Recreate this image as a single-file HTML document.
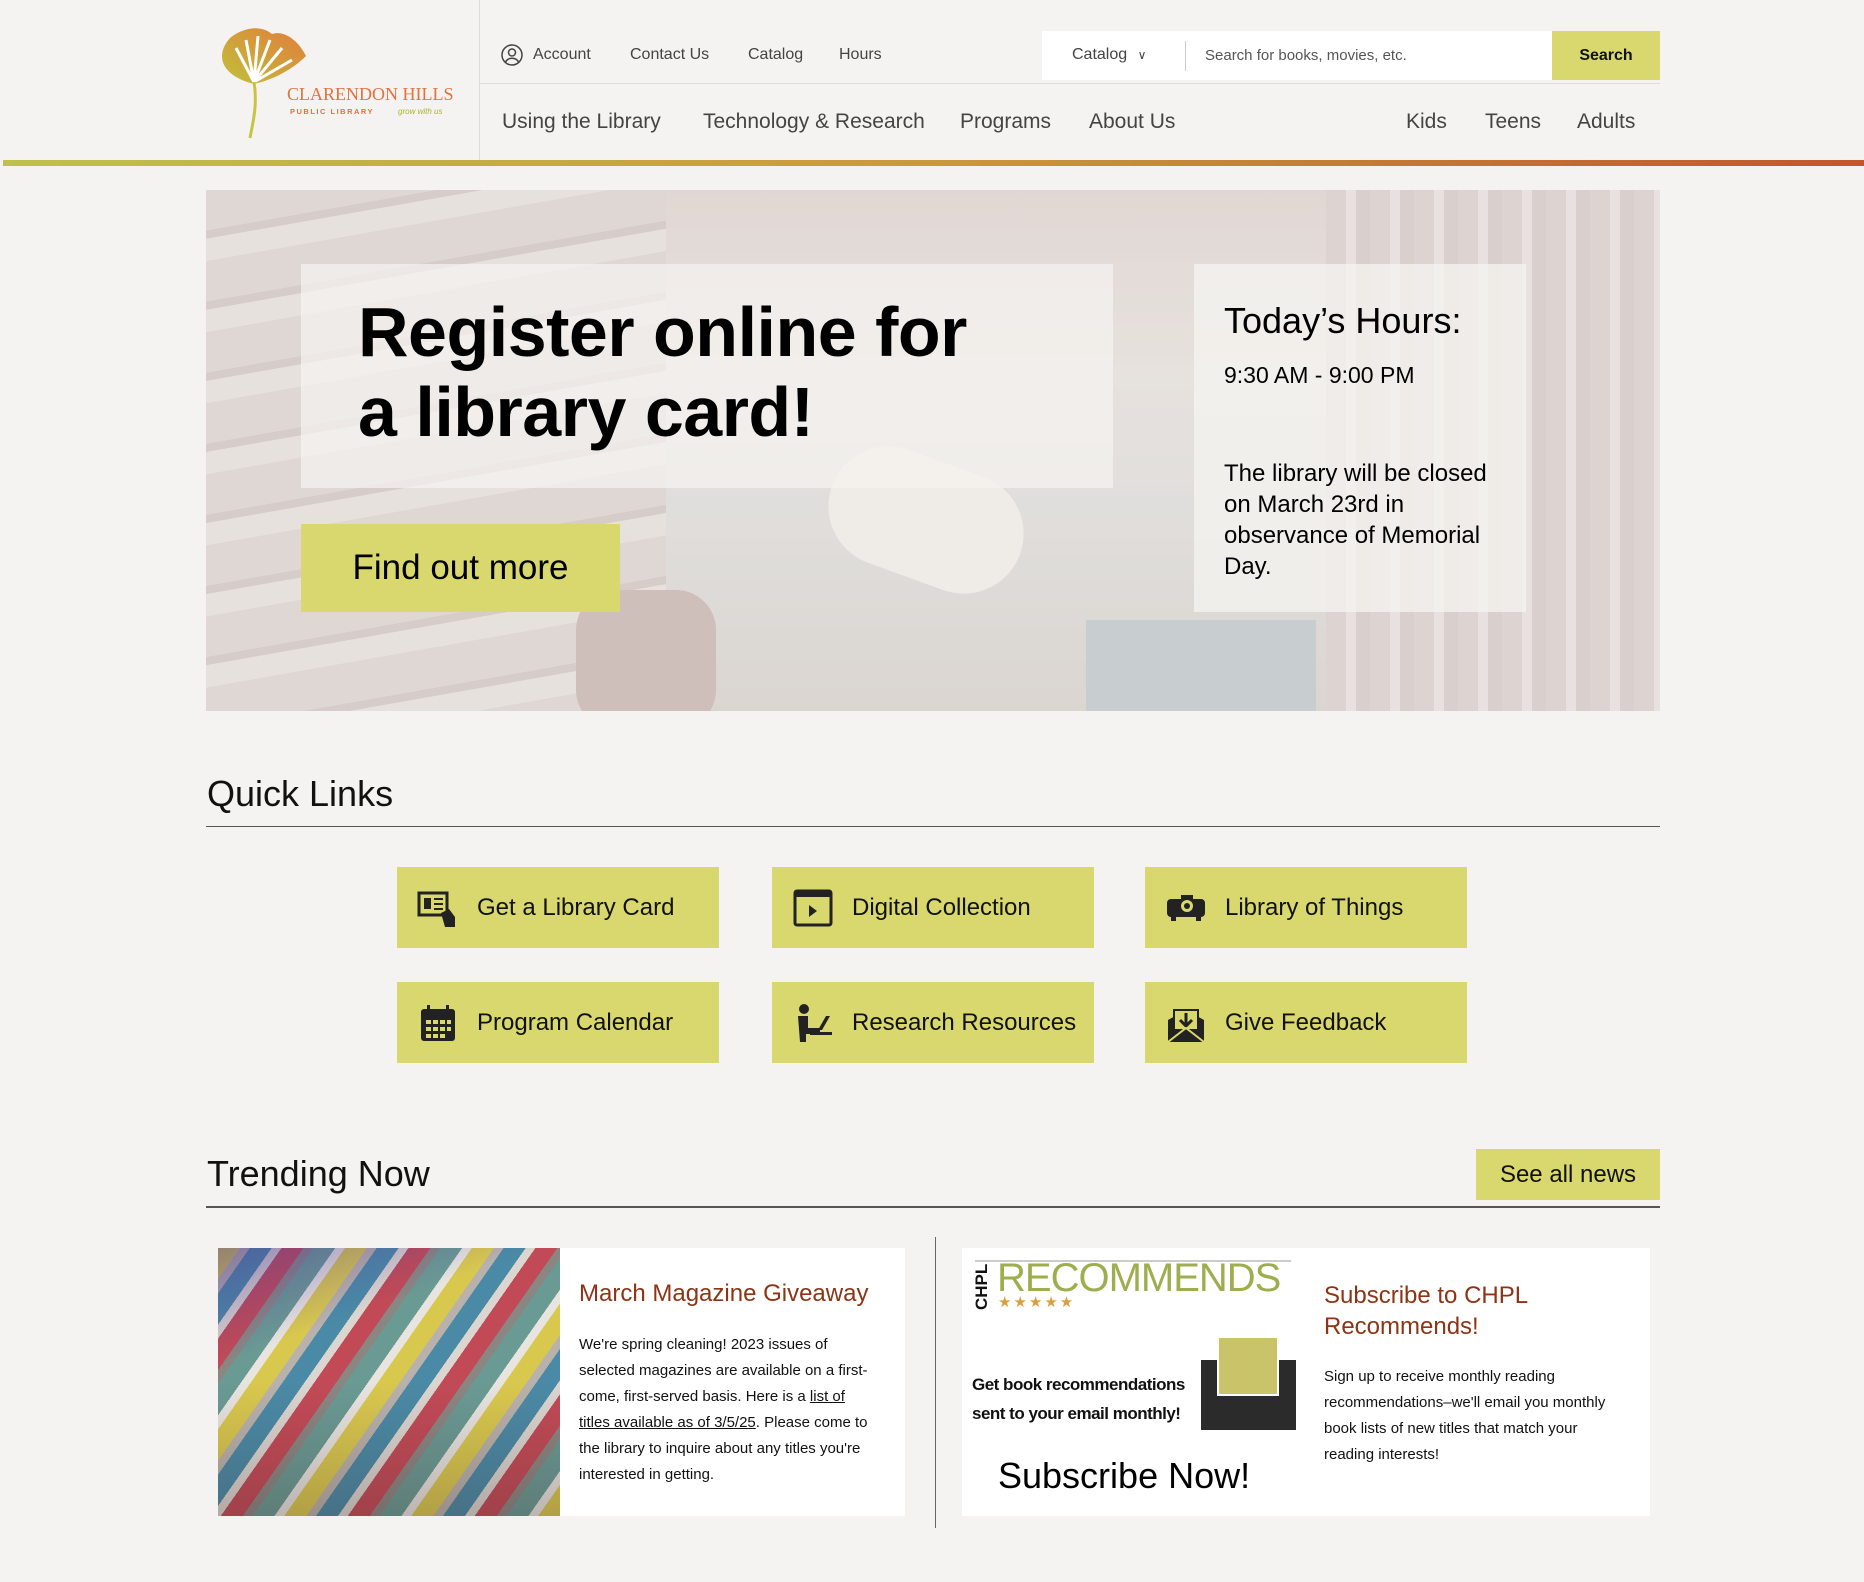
<!DOCTYPE html>
<html><head><meta charset="utf-8"><style>
*{margin:0;padding:0;box-sizing:border-box}
body{width:1864px;height:1582px;background:#f4f3f1;font-family:"Liberation Sans",sans-serif;color:#111;position:relative;overflow:hidden}
.a{position:absolute}
.top a{position:absolute;top:46px;font-size:16px;color:#444;text-decoration:none}
.nav{position:absolute;top:110px;font-size:21px;color:#444}
.ql{position:absolute;width:322px;height:81px;background:#d9d86e;display:flex;align-items:center;padding-left:20px;font-size:24px;color:#111}
.ql svg{width:42px;height:42px;margin-right:18px;flex:none}
</style></head><body>
<!-- logo -->
<svg class="a" style="left:212px;top:26px" width="250" height="115" viewBox="0 0 250 115">
<defs><linearGradient id="lg" x1="0" y1="1" x2="1" y2="0"><stop offset="0" stop-color="#bfc23a"/><stop offset="1" stop-color="#e47b3c"/></linearGradient></defs>
<path d="M42 58 C10 50 2 30 18 12 C30 2 48 -2 60 8 C72 4 86 14 94 30 C80 44 60 54 42 58Z" fill="url(#lg)"/>
<path d="M42 56 L24 22 M42 56 L34 14 M42 56 L46 10 M42 56 L58 14 M42 56 L70 22 M42 56 L80 34" stroke="#fff" stroke-width="3"/>
<path d="M42 56 C46 80 40 100 38 112" stroke="#c9c43f" stroke-width="3" fill="none"/>
<text x="75" y="74" font-family="Liberation Serif" font-size="18" fill="#e4703c">CLARENDON HILLS</text>
<text x="78" y="88" font-size="7.5" fill="#e4703c" letter-spacing="1.5" font-weight="bold">PUBLIC LIBRARY</text>
<text x="186" y="88" font-size="8" fill="#a8b52e" font-style="italic">grow with us</text>
</svg>
<div class="a" style="left:479px;top:0;width:1px;height:160px;background:#ddd"></div>
<div class="a" style="left:480px;top:83px;width:1180px;height:1px;background:#ddd"></div>
<div class="top">
<svg class="a" style="left:501px;top:44px" width="22" height="22" viewBox="0 0 22 22" fill="none" stroke="#444" stroke-width="1.5"><circle cx="11" cy="11" r="10"/><circle cx="11" cy="8.5" r="3.5"/><path d="M4.5 18 C7 13 15 13 17.5 18"/></svg>
<a style="left:533px">Account</a><a style="left:630px">Contact Us</a><a style="left:748px">Catalog</a><a style="left:839px">Hours</a>
</div>
<div class="a" style="left:1042px;top:31px;width:618px;height:49px;background:#fff"></div>
<div class="a" style="left:1072px;top:46px;font-size:16px;color:#444">Catalog <span style="font-size:12px;margin-left:6px">&#8744;</span></div>
<div class="a" style="left:1185px;top:41px;width:1px;height:30px;background:#ccc"></div>
<div class="a" style="left:1205px;top:47px;font-size:15px;color:#555">Search for books, movies, etc.</div>
<div class="a" style="left:1552px;top:31px;width:108px;height:49px;background:#d9d86e;font-size:16px;font-weight:bold;display:flex;align-items:center;justify-content:center">Search</div>
<div class="nav" style="left:502px">Using the Library</div>
<div class="nav" style="left:703px">Technology &amp; Research</div>
<div class="nav" style="left:960px">Programs</div>
<div class="nav" style="left:1089px">About Us</div>
<div class="nav" style="left:1406px">Kids</div>
<div class="nav" style="left:1485px">Teens</div>
<div class="nav" style="left:1577px">Adults</div>
<div class="a" style="left:3px;top:160px;width:1861px;height:6px;background:linear-gradient(90deg,#bfc14a,#c89a3a 50%,#c4552a)"></div>

<!-- hero -->
<div class="a" style="left:206px;top:190px;width:1454px;height:521px;overflow:hidden;background:#d9d2cc">
<div class="a" style="left:0;top:0;width:460px;height:521px;background:repeating-linear-gradient(170deg,#d6ccc8 0 40px,#c8bcb8 40px 48px,#e2dcd8 48px 70px)"></div>
<div class="a" style="left:460px;top:0;width:660px;height:521px;background:linear-gradient(180deg,#d8cdc9 0,#e2ddd8 35%,#d8d8d6 60%,#cfcac4)"></div>
<div class="a" style="left:1120px;top:0;width:334px;height:521px;background:repeating-linear-gradient(90deg,#d3c6c4 0 20px,#e3dcda 20px 30px,#cdc2c0 30px 44px)"></div>
<div class="a" style="left:620px;top:270px;width:200px;height:120px;border-radius:60px;background:#eeebe6;transform:rotate(20deg)"></div>
<div class="a" style="left:880px;top:430px;width:230px;height:91px;background:#b3bec4"></div>
<div class="a" style="left:370px;top:400px;width:140px;height:140px;background:#bda8a2;border-radius:40px"></div>
<div class="a" style="left:0;top:0;width:1454px;height:521px;background:rgba(240,236,232,.35)"></div>
</div>
<div class="a" style="left:301px;top:264px;width:812px;height:224px;background:rgba(245,243,240,.72)"></div>
<div class="a" style="left:358px;top:292px;font-size:70px;font-weight:bold;line-height:80px;letter-spacing:-.5px;color:#000">Register online for<br>a library card!</div>
<div class="a" style="left:301px;top:524px;width:319px;height:88px;background:#d9d86e;font-size:35px;display:flex;align-items:center;justify-content:center;color:#000">Find out more</div>
<div class="a" style="left:1194px;top:264px;width:332px;height:348px;background:rgba(245,243,240,.78)"></div>
<div class="a" style="left:1224px;top:300px;font-size:36px;color:#000">Today’s Hours:</div>
<div class="a" style="left:1224px;top:362px;font-size:23px;color:#000">9:30 AM - 9:00 PM</div>
<div class="a" style="left:1224px;top:458px;font-size:24px;line-height:31px;color:#000;width:285px">The library will be closed on March 23rd in observance of Memorial Day.</div>

<!-- quick links -->
<div class="a" style="left:207px;top:773px;font-size:36px;color:#111">Quick Links</div>
<div class="a" style="left:206px;top:826px;width:1454px;height:1px;background:#555"></div>
<div class="ql" style="left:397px;top:867px"><svg viewBox="0 0 42 42"><rect x="2" y="6" width="28" height="22" fill="none" stroke="#222" stroke-width="3"/><rect x="7" y="11" width="7" height="11" fill="#222"/><path d="M17 12h9M17 17h9M17 22h9" stroke="#222" stroke-width="2"/><path d="M24 26 l8 -4 l6 8 v10 h-10z" fill="#222"/></svg>Get a Library Card</div>
<div class="ql" style="left:772px;top:867px"><svg viewBox="0 0 42 42"><rect x="3" y="4" width="36" height="34" rx="2" fill="none" stroke="#222" stroke-width="3"/><rect x="3" y="4" width="36" height="6" fill="#222"/><path d="M17 18 l8 6 l-8 6z" fill="#222"/></svg>Digital Collection</div>
<div class="ql" style="left:1145px;top:867px"><svg viewBox="0 0 42 42"><rect x="2" y="12" width="38" height="18" rx="4" fill="#222"/><circle cx="22" cy="19" r="6" fill="#d9d86e"/><circle cx="22" cy="19" r="3" fill="#222"/><rect x="16" y="8" width="12" height="5" fill="#222"/><rect x="6" y="30" width="5" height="4" fill="#222"/><rect x="31" y="30" width="5" height="4" fill="#222"/></svg>Library of Things</div>
<div class="ql" style="left:397px;top:982px"><svg viewBox="0 0 42 42"><rect x="4" y="7" width="34" height="32" rx="3" fill="#222"/><rect x="10" y="3" width="3" height="8" fill="#222"/><rect x="29" y="3" width="3" height="8" fill="#222"/><g fill="#d9d86e"><rect x="9" y="18" width="5" height="4"/><rect x="16" y="18" width="5" height="4"/><rect x="23" y="18" width="5" height="4"/><rect x="30" y="18" width="4" height="4"/><rect x="9" y="25" width="5" height="4"/><rect x="16" y="25" width="5" height="4"/><rect x="23" y="25" width="5" height="4"/><rect x="30" y="25" width="4" height="4"/><rect x="9" y="32" width="5" height="4"/><rect x="16" y="32" width="5" height="4"/><rect x="23" y="32" width="5" height="4"/></g></svg>Program Calendar</div>
<div class="ql" style="left:772px;top:982px"><svg viewBox="0 0 42 42"><circle cx="12" cy="7" r="5" fill="#222"/><path d="M6 14h10v12h12v6h-14v8h-6z" fill="#222"/><path d="M26 28 l8 -14 h4 l-8 14z" fill="#222"/><rect x="18" y="30" width="22" height="3" fill="#222"/></svg>Research Resources</div>
<div class="ql" style="left:1145px;top:982px"><svg viewBox="0 0 42 42"><path d="M3 18 l18 -10 l18 10 v22 h-36z" fill="#222"/><rect x="9" y="8" width="24" height="20" fill="#d9d86e" stroke="#222" stroke-width="2"/><path d="M21 11v12M15 18l6 6l6-6" stroke="#222" stroke-width="3" fill="none"/><path d="M3 40 l18 -14 l18 14" stroke="#d9d86e" stroke-width="2" fill="none"/></svg>Give Feedback</div>

<!-- trending -->
<div class="a" style="left:207px;top:1153px;font-size:36px;color:#111">Trending Now</div>
<div class="a" style="left:1476px;top:1149px;width:184px;height:51px;background:#d9d86e;font-size:24px;display:flex;align-items:center;justify-content:center">See all news</div>
<div class="a" style="left:206px;top:1206px;width:1454px;height:2px;background:#555"></div>
<div class="a" style="left:935px;top:1237px;width:1px;height:291px;background:#666"></div>

<div class="a" style="left:218px;top:1248px;width:687px;height:268px;background:#fff"></div>
<div class="a" style="left:218px;top:1248px;width:342px;height:268px;background:
linear-gradient(160deg,rgba(80,60,150,.5),transparent 30%),
linear-gradient(0deg,rgba(60,40,40,.25),transparent 50%),
repeating-linear-gradient(125deg,#d9c84e 0 18px,#b9b2ac 18px 26px,#4a8aa6 26px 44px,#dcd6d0 44px 52px,#c24a56 52px 70px,#8a8682 70px 78px,#6a9a94 78px 96px,#e8e4e0 96px 104px)"></div>
<div class="a" style="left:579px;top:1280px;font-size:24px;color:#8c3413">March Magazine Giveaway</div>
<div class="a" style="left:579px;top:1332px;width:300px;font-size:15px;line-height:26px;color:#111">We're spring cleaning! 2023 issues of selected magazines are available on a first-come, first-served basis. Here is a <u>list of titles available as of 3/5/25</u>. Please come to the library to inquire about any titles you're interested in getting.</div>

<div class="a" style="left:962px;top:1248px;width:688px;height:268px;background:#fff"></div>
<div class="a" style="left:975px;top:1260px;width:316px;height:2px;background:#ccc"></div>
<div class="a" style="left:972px;font-size:17px;font-weight:bold;transform:rotate(-90deg);transform-origin:left top;top:1310px">CHPL</div>
<div class="a" style="left:997px;top:1256px;font-size:40px;color:#9eae4e;letter-spacing:-1px">RECOMMENDS</div>
<div class="a" style="left:998px;top:1293px;font-size:15px;color:#d9a040;letter-spacing:2px">★★★★★</div>
<div class="a" style="left:972px;top:1370px;font-size:17px;font-weight:bold;line-height:29px;letter-spacing:-.5px">Get book recommendations<br>sent to your email monthly!</div>
<div class="a" style="left:1201px;top:1360px;width:95px;height:70px;background:#2b2b2b"></div>
<div class="a" style="left:1217px;top:1336px;width:62px;height:60px;background:#c9c36a;border:2px solid #fff"></div>
<div class="a" style="left:998px;top:1455px;font-size:36px;color:#000">Subscribe Now!</div>
<div class="a" style="left:1324px;top:1280px;font-size:24px;line-height:31px;color:#8c3413">Subscribe to CHPL<br>Recommends!</div>
<div class="a" style="left:1324px;top:1364px;width:300px;font-size:15px;line-height:26px;color:#111">Sign up to receive monthly reading recommendations–we'll email you monthly book lists of new titles that match your reading interests!</div>
</body></html>
